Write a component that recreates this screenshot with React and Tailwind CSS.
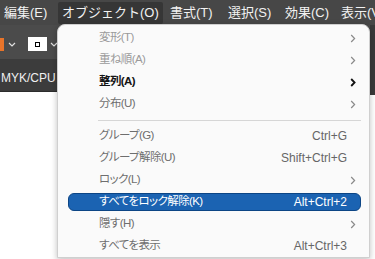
const font = "font-['Liberation_Sans','Noto_Sans_CJK_JP',sans-serif]";

const menubar = [
  { label: '編集(E)', w: 'w-[58px]', pl: 'pl-[4px]' },
  { label: 'オブジェクト(O)', w: 'w-[106px]', pl: 'pl-[4px]', active: true },
  { label: '書式(T)', w: 'w-[58px]', pl: 'pl-[6px]' },
  { label: '選択(S)', w: 'w-[57px]', pl: 'pl-[6px]' },
  { label: '効果(C)', w: 'w-[56px]', pl: 'pl-[6px]' },
  { label: '表示(V)', w: 'w-[60px]', pl: 'pl-[6px]' },
];

const items = [
  { label: '変形(T)', tone: 'light', sub: true },
  { label: '重ね順(A)', tone: 'light', sub: true },
  { label: '整列(A)', tone: 'strong', sub: true },
  { label: '分布(U)', tone: 'mid', sub: true },
  { sep: true },
  { label: 'グループ(G)', tone: 'mid', shortcut: 'Ctrl+G' },
  { label: 'グループ解除(U)', tone: 'mid', shortcut: 'Shift+Ctrl+G' },
  { label: 'ロック(L)', tone: 'mid', sub: true },
  { label: 'すべてをロック解除(K)', active: true, shortcut: 'Alt+Ctrl+2' },
  { label: '隠す(H)', tone: 'mid', sub: true },
  { label: 'すべてを表示', tone: 'mid', shortcut: 'Alt+Ctrl+3' },
];

function Chevron({ dark }) {
  return (
    <svg width="6" height="9" viewBox="0 0 6 9" className="shrink-0">
      <path
        d="M1.2 1 L4.6 4.5 L1.2 8"
        fill="none"
        stroke={dark ? '#111' : '#8a8a8a'}
        strokeWidth={dark ? 1.8 : 1.2}
      />
    </svg>
  );
}

function Caret() {
  return (
    <svg width="8" height="5" viewBox="0 0 8 5" className="shrink-0">
      <path d="M1 1 L4 4 L7 1" fill="none" stroke="#e0e0e0" strokeWidth="1.2" />
    </svg>
  );
}

function MenuItem({ item }) {
  if (item.sep) {
    return (
      <div className="flex h-[10px] items-center pl-[40px] pr-[8px]">
        <div className="h-px w-full bg-[#d6d6d6]" />
      </div>
    );
  }
  const color = item.active
    ? 'text-white'
    : item.tone === 'strong'
      ? 'text-[#151515] font-bold'
      : item.tone === 'light'
        ? 'text-[#9a9a9a]'
        : 'text-[#6e6e6e]';
  return (
    <div className="flex h-[22px] items-center px-[8px] pl-[10px]">
      <div
        className={`flex h-[18px] w-full items-center rounded-[6px] pl-[30px] pr-[13px] ${
          item.active ? 'border border-[#0c4585] bg-[#1b63b2]' : 'border border-transparent'
        }`}
      >
        <span
          className={`flex-1 text-[11.5px] leading-none tracking-[-0.6px] [font-feature-settings:'palt'] ${color}`}
        >
          {item.label}
        </span>
        {item.shortcut ? (
          <span className={`text-[12px] leading-none ${item.active ? 'text-white' : 'text-[#666]'}`}>
            {item.shortcut}
          </span>
        ) : null}
        {item.sub ? (
          <span className="mr-[-9px]">
            <Chevron dark={item.tone === 'strong'} />
          </span>
        ) : null}
      </div>
    </div>
  );
}

export default function App() {
  return (
    <div className={`relative h-[259px] w-[375px] overflow-hidden bg-white ${font}`}>
      <div className="flex h-[25px] items-center bg-[#474747]">
        {menubar.map((m) => (
          <div key={m.label} className={`flex h-full shrink-0 items-center ${m.w}`}>
            <div
              className={`flex h-[22px] items-center whitespace-nowrap ${m.pl} ${
                m.active ? 'w-[105px] rounded-[2px] bg-[#363636]' : ''
              } text-[13px] text-[#f2f2f2]`}
            >
              {m.label}
            </div>
          </div>
        ))}
      </div>

      <div className="flex">
        <div className="w-[370px]">
          <div className="flex h-[34px] items-center bg-[#4b4b4b] pt-[4px]">
            <div className="h-[13px] w-[4px] bg-[#e8742a]" />
            <span className="ml-[4px]">
              <Caret />
            </span>
            <div className="ml-[12px] flex h-[14px] w-[19px] items-center justify-center bg-white">
              <div className="h-[5px] w-[5px] border-[1.5px] border-black" />
            </div>
            <span className="ml-[3px]">
              <Caret />
            </span>
          </div>
          <div className="flex h-[33px] items-center border-b border-[#2c2c2c] bg-[#3c3c3c] pt-[6px] text-[12px] text-[#f0f0f0]">
            <span className="ml-[1px] whitespace-nowrap">MYK/CPU :</span>
          </div>
        </div>
        <div className="flex w-[5px] flex-col">
          <div className="h-[70px] bg-[#3a3a3a]" />
          <div className="flex-1 bg-[#e9e9e9]" />
        </div>
      </div>

      <div className="absolute left-[57px] top-[24px] w-[313px] rounded-t-[8px] border border-[#cfcfcf] bg-[#fafafa] pt-[2px] shadow-[0_2px_6px_rgba(0,0,0,0.25)]">
        {items.map((item, i) => (
          <MenuItem key={i} item={item} />
        ))}
      </div>
    </div>
  );
}
